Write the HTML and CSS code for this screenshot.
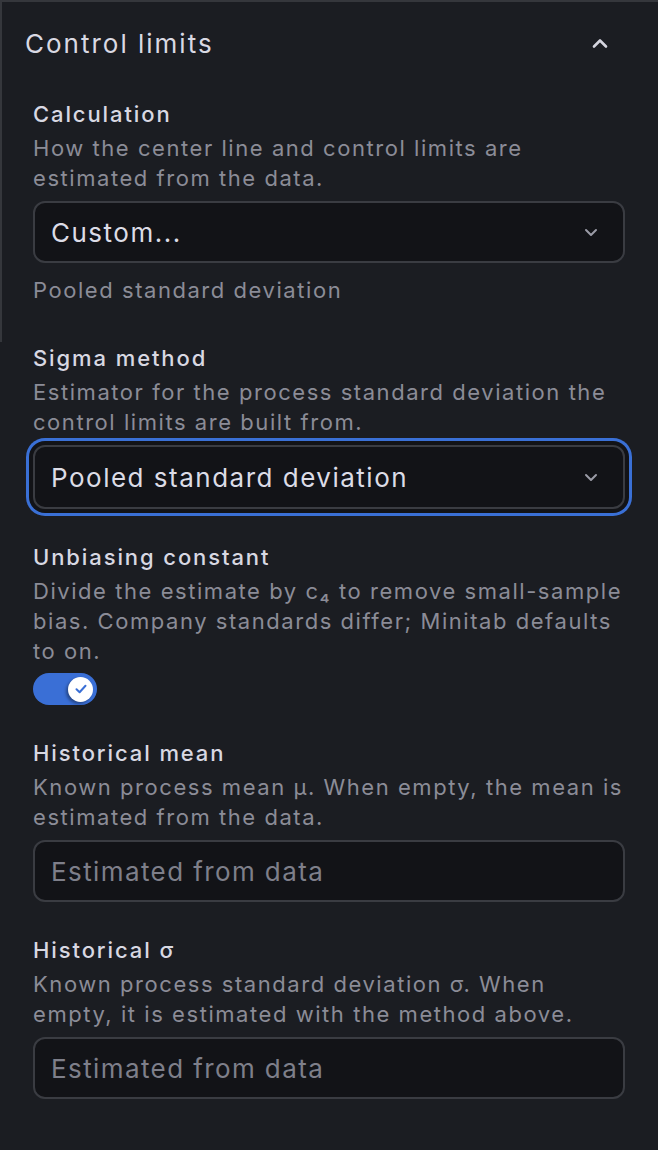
FILE: index.html
```html
<!DOCTYPE html>
<html lang="en">
<head>
<meta charset="utf-8">
<title>Control limits</title>
<link rel="stylesheet" href="styles.css">
</head>
<body>
<section class="panel">
  <header class="panel-head">
    <h2 class="panel-title">Control limits</h2>
    <svg class="chev-up" width="18" height="12" viewBox="0 0 18 12" aria-hidden="true"><path d="M3 9.5 L9 3.5 L15 9.5" fill="none" stroke="currentColor" stroke-width="2.6" stroke-linecap="round" stroke-linejoin="round"/></svg>
  </header>

  <div class="field">
    <div class="label">Calculation</div>
    <div class="desc">How the center line and control limits are estimated from the data.</div>
    <div class="select">
      <span class="value">Custom...</span>
      <svg class="chev-down" width="16" height="10" viewBox="0 0 16 10" aria-hidden="true"><path d="M3 3 L8 8 L13 3" fill="none" stroke="currentColor" stroke-width="2" stroke-linecap="round" stroke-linejoin="round"/></svg>
    </div>
    <div class="hint">Pooled standard deviation</div>
  </div>

  <div class="field">
    <div class="label">Sigma method</div>
    <div class="desc">Estimator for the process standard deviation the control limits are built from.</div>
    <div class="select focused">
      <span class="value">Pooled standard deviation</span>
      <svg class="chev-down" width="16" height="10" viewBox="0 0 16 10" aria-hidden="true"><path d="M3 3 L8 8 L13 3" fill="none" stroke="currentColor" stroke-width="2" stroke-linecap="round" stroke-linejoin="round"/></svg>
    </div>
  </div>

  <div class="field">
    <div class="label">Unbiasing constant</div>
    <div class="desc">Divide the estimate by c₄ to remove small-sample bias. Company standards differ; Minitab defaults to on.</div>
    <div class="toggle on">
      <span class="knob">
        <svg width="16" height="16" viewBox="0 0 16 16" aria-hidden="true"><path d="M3.5 8.3 L6.6 11.2 L12.5 4.8" fill="none" stroke="currentColor" stroke-width="2" stroke-linecap="round" stroke-linejoin="round"/></svg>
      </span>
    </div>
  </div>

  <div class="field">
    <div class="label">Historical mean</div>
    <div class="desc">Known process mean μ. When empty, the mean is estimated from the data.</div>
    <div class="input"><span class="placeholder">Estimated from data</span></div>
  </div>

  <div class="field">
    <div class="label">Historical σ</div>
    <div class="desc">Known process standard deviation σ. When empty, it is estimated with the method above.</div>
    <div class="input"><span class="placeholder">Estimated from data</span></div>
  </div>
</section>
</body>
</html>
```

FILE: styles.css
```css
* { box-sizing: border-box; }

html, body {
  margin: 0;
  padding: 0;
  background: #1b1d22;
}

body {
  font-family: Inter, "Noto Sans", "Liberation Sans", sans-serif;
  color: #d6d6e0;
  width: 658px;
  min-height: 1150px;
  border-top: 2px solid #35373c;
}

.panel {
  position: relative;
  padding: 24px 33px 40px 33px;
}

.panel::before {
  content: "";
  position: absolute;
  left: 0;
  top: 0;
  width: 2px;
  height: 340px;
  background: #35373c;
}

.panel-head {
  display: flex;
  align-items: center;
  justify-content: space-between;
  margin-left: -8px;
  padding-right: 16px;
  height: 36px;
}

.panel-title {
  margin: 0;
  font-size: 26px;
  line-height: 34px;
  font-weight: 400;
  letter-spacing: 2px;
  color: #d9d9e3;
}

.chev-up {
  color: #d4d4de;
  display: block;
  margin-top: -3px;
}

.field {
  display: flex;
  flex-direction: column;
  margin-top: 33px;
}

.panel-head + .field { margin-top: 37px; }

.label {
  font-size: 22px;
  line-height: 30px;
  font-weight: 500;
  letter-spacing: 1.9px;
  color: #d8d8e2;
}

.desc {
  margin-top: 4px;
  font-size: 22px;
  line-height: 30px;
  letter-spacing: 1.55px;
  color: #8b8c97;
}

.select, .input {
  margin-top: 8px;
  height: 62px;
  border: 2px solid #3a3c42;
  border-radius: 12px;
  background: #121317;
  display: flex;
  align-items: center;
  justify-content: space-between;
  padding: 0 24px 0 16px;
}

.select.focused {
  height: 64px;
  box-shadow: 0 0 0 4px #121317, 0 0 0 7px #3a70d6;
}

.value {
  font-size: 26px;
  letter-spacing: 1.5px;
  color: #dcdce6;
}

.chev-down {
  color: #9a9ba6;
  display: block;
}

.placeholder {
  font-size: 26px;
  letter-spacing: 1.4px;
  color: #7e7f8a;
}

.hint {
  margin-top: 12px;
  margin-bottom: 5px;
  font-size: 22px;
  line-height: 30px;
  letter-spacing: 1.55px;
  color: #8b8c97;
}

.toggle {
  margin-top: 7px;
  width: 64px;
  height: 32px;
  border-radius: 16px;
  background: #3a6fd6;
  display: flex;
  align-items: center;
  justify-content: flex-end;
  padding: 0 4px;
}

.knob {
  width: 25px;
  height: 25px;
  border-radius: 50%;
  background: #ffffff;
  color: #3a6fd6;
  display: flex;
  align-items: center;
  justify-content: center;
  box-shadow: -2px 2px 3px rgba(0, 0, 0, 0.35);
}

.knob svg { display: block; }
```
